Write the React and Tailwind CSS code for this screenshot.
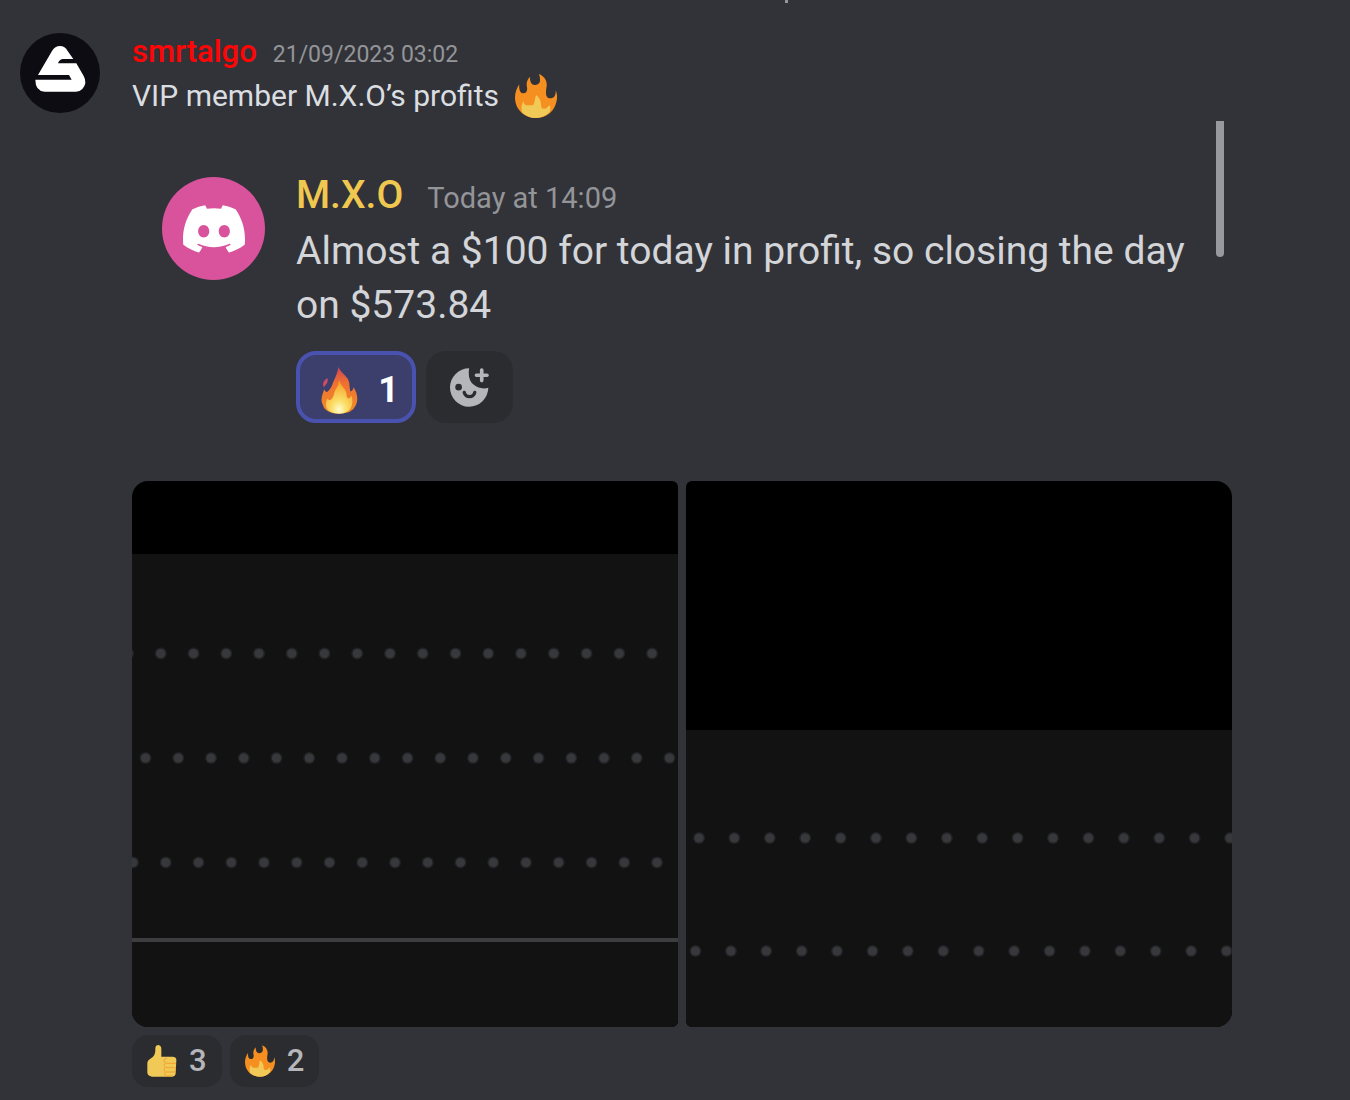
import { SiDiscord } from 'react-icons/si';

const reactions = [
  { name: 'Thumbs up', count: 3, Icon: ThumbIcon },
  { name: 'Fire', count: 2, Icon: FlameIcon },
];

const charts = [
  {
    title: 'Profit chart, first part',
    top: 73,
    gap: 32.75,
    rows: [
      { y: 172.5, x: -4 },
      { y: 277, x: 13.5 },
      { y: 381.5, x: 1 },
    ],
    line: 459,
    corners: 'rounded-l-2xl rounded-r-md',
  },
  {
    title: 'Profit chart, second part',
    top: 249,
    gap: 35.4,
    rows: [
      { y: 357, x: 13 },
      { y: 470, x: 9.5 },
    ],
    corners: 'rounded-l-md rounded-r-2xl',
  },
];

export default function App() {
  return (
    <main className="relative min-h-screen overflow-hidden bg-[#323338] font-['Roboto',sans-serif] text-[#dbdee1]">
      {/* Tail of the previous message */}
      <div className="absolute top-0 left-[785px] h-[3px] w-[3px] bg-[#96979b]" />

      <article className="flex gap-8 px-5 pt-[33px]">
        <BrandAvatar />
        <div className="min-w-0 max-w-[1100px] flex-1">
          <header className="flex items-baseline gap-4 leading-[38px]">
            <a href="#" className="text-[31px] font-medium text-[#ff0505]">
              smrtalgo
            </a>
            <time className="text-[23px] text-[#949599]">21/09/2023 03:02</time>
          </header>
          <p className="flex items-center gap-4 text-[30px] leading-[44px]">
            VIP member M.X.O’s profits
            <FlameIcon className="h-11 w-[42px]" />
          </p>

          <QuotedMessage />

          {/* Attachments */}
          <div className="mt-2 grid grid-cols-2 gap-2">
            {charts.map((chart) => (
              <DotChart key={chart.title} {...chart} />
            ))}
          </div>

          {/* Reactions */}
          <div className="mt-2 flex gap-2">
            {reactions.map(({ name, count, Icon }) => (
              <button
                key={name}
                type="button"
                aria-label={`${name}, ${count}`}
                className="flex h-[52px] items-center gap-3 rounded-2xl bg-[#2b2c30] px-[15px] text-[31px] font-medium text-[#b5b6ba]"
              >
                <Icon className="h-8 w-[30px]" />
                {count}
              </button>
            ))}
          </div>
        </div>
      </article>
    </main>
  );
}

function QuotedMessage() {
  return (
    <section className="mt-[3px] flex pr-2 pl-[30px]">
      <div className="mt-14 flex size-[103px] shrink-0 items-center justify-center rounded-full bg-[#d8539c]">
        <SiDiscord className="size-[62px] text-white" />
      </div>
      <div className="ml-[31px] flex-1 pt-12 pb-[50px]">
        <header className="flex items-baseline gap-6 leading-[52px]">
          <a href="#" className="text-[39px] font-medium text-[#f1c84f]">
            M.X.O
          </a>
          <time className="text-[29px] text-[#949599]">Today at 14:09</time>
        </header>
        <p className="text-[39px] leading-[54px] text-[#d3d5d9]">
          Almost a $100 for today in profit, so closing the day on $573.84
        </p>
        <div className="mt-[19px] flex gap-2.5">
          <button
            type="button"
            aria-label="Fire, 1"
            className="flex h-[72px] w-[120px] items-center justify-center gap-5 rounded-[20px] border-4 border-[#4a52b0] bg-[#3c3f6b] pt-1.5 pl-2 text-[36px] font-bold text-white"
          >
            <GlossyFlameIcon />
            1
          </button>
          <button
            type="button"
            aria-label="Add reaction"
            className="flex h-[72px] w-[87px] items-center justify-center rounded-[20px] bg-[#2b2c30]"
          >
            <AddReactionIcon />
          </button>
        </div>
      </div>
      <div className="h-[136px] w-2 shrink-0 rounded-b-full bg-[#98999e]" />
    </section>
  );
}

function DotChart({ title, top, gap, rows, line, corners }) {
  return (
    <svg
      viewBox="0 0 546 546"
      role="img"
      aria-label={title}
      className={`block w-full bg-black ${corners}`}
    >
      <rect y={top} width="546" height={546 - top} fill="#121212" />
      {rows.map((row) =>
        Array.from({ length: 18 }, (_, i) => (
          <g key={`${row.y}-${i}`} fill="#37383c">
            <circle cx={row.x + i * gap} cy={row.y} r="6" opacity="0.45" />
            <circle cx={row.x + i * gap} cy={row.y} r="4.6" />
          </g>
        ))
      )}
      {line && <rect y={line - 2} width="546" height="4" fill="#3d3d40" />}
    </svg>
  );
}

function BrandAvatar() {
  return (
    <svg viewBox="0 0 240 240" className="size-20 shrink-0" aria-hidden="true">
      <circle cx="120" cy="120" r="120" fill="#0c0c12" />
      <path
        fill="#fff"
        d="M96 54Q105 39 120 39T143 54L160 78H128Q117 80 114 91H169L191 129Q203 150 187 168Q180 176 168 176H74Q46 174 46 140H155L147 126H54Z"
      />
    </svg>
  );
}

function FlameIcon({ className }) {
  return (
    <svg viewBox="0 0 126 132" className={className} aria-hidden="true">
      <path
        fill="#f58f20"
        d="M13 31C11 46 15 57 23 58C33 59 38 52 36 40C33 27 37 16 45 8C44 22 49 33 59 33C70 34 76 27 75 17Q75 8 72 0C88 7 97 20 95 37C92 52 90 73 106 73C118 73 123 63 122 49C127 60 127 70 125 80C120 110 95 132 63 132C29 132 1 108 0 72C0 56 5 43 13 31Z"
      />
      <path
        fill="#f1c956"
        d="M26 81C27 91 30 94 37 94H53C60 91 59 73 63 63C70 68 75 75 77 83C79 94 77 104 87 104Q96 104 103 93C108 99 107 108 103 115Q86 132 63 132Q39 132 22 116C17 105 19 91 26 81Z"
      />
    </svg>
  );
}

function ThumbIcon({ className }) {
  return (
    <svg viewBox="0 0 88 96" className={className} aria-hidden="true">
      <path
        fill="#f1c956"
        d="M24 10Q25 0 33 0Q42 1 42 13V35H75Q88 35 87 46L85 85Q84 95 75 95H14Q0 93 0 82V54Q0 46 8 42Q26 34 24 10Z"
      />
      <path
        fill="none"
        stroke="#f09a2a"
        strokeWidth="2.5"
        d="M59 40Q50 40 50 46Q50 55 59 55H86M52 56Q47 68 59 68H86M52 69Q48 81 58 81H85M53 82Q49 93 60 93H77"
      />
    </svg>
  );
}

function GlossyFlameIcon() {
  return (
    <svg viewBox="0 0 110 140" className="h-[47px] w-[37px]" aria-hidden="true">
      <defs>
        <linearGradient id="flame" x1="0" y1="0" x2="0" y2="1">
          <stop offset="0" stopColor="#cf4654" />
          <stop offset="0.35" stopColor="#ef7130" />
          <stop offset="1" stopColor="#f08e28" />
        </linearGradient>
        <radialGradient id="core" cx="0.5" cy="0.88" r="0.8">
          <stop offset="0" stopColor="#fffbd0" />
          <stop offset="0.35" stopColor="#fbdf68" />
          <stop offset="1" stopColor="#f6a32d" />
        </radialGradient>
      </defs>
      <path
        fill="url(#flame)"
        d="M52 0C58 18 82 28 84 48Q85 62 87 73Q95 71 97 60C108 76 112 99 103 115Q94 139 54 139Q12 139 5 112C-3 94 5 83 9 66Q14 78 20 73C31 62 32 56 37 43C44 29 49 17 52 0Z"
      />
      <path fill="#cf4c66" d="M19 33C23 48 13 52 9 61C2 50 8 41 19 33Z" />
      <path
        fill="url(#core)"
        d="M54 39C57 56 75 65 76 81Q76 92 80 94Q87 93 91 85C97 107 94 139 54 139C17 139 8 117 19 94Q24 102 30 97C41 87 36 78 45 65Q53 55 54 39Z"
      />
    </svg>
  );
}

function AddReactionIcon() {
  return (
    <svg viewBox="0 0 116 118" className="size-[39px]" aria-hidden="true">
      <path
        fill="#b5b6ba"
        d="M57 1C53 23 58 41 71 51C83 61 99 64 115 60A58 58 0 1 1 57 1Z"
      />
      <circle cx="25" cy="58" r="10" fill="#2b2c30" />
      <path
        fill="none"
        stroke="#2b2c30"
        strokeWidth="10"
        strokeLinecap="round"
        d="M42 74C46 91 70 91 74 74"
      />
      <path stroke="#b5b6ba" strokeWidth="11" strokeLinecap="round" d="M95 6V38M79 22H111" />
    </svg>
  );
}
